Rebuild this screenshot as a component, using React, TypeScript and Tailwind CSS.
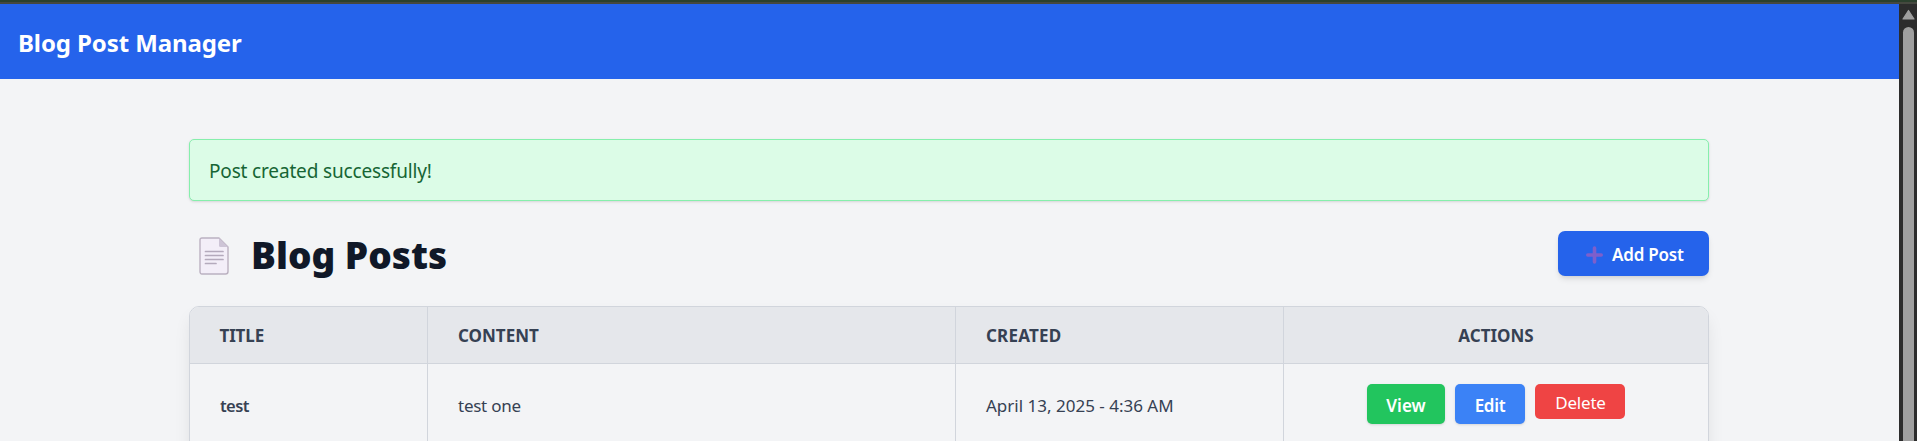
function PageIcon() {
  return (
    <svg width="30" height="38" viewBox="0 0 30 38" fill="none" aria-hidden="true">
      <path d="M3 1H20L29 10V34.500Q29 37 26.500 37H3Q1 37 1 34.500V3Q1 1 3 1Z" fill="#F3EEF8" stroke="#BBB1C1" strokeWidth="1.400" strokeLinejoin="round" />
      <path d="M20 1L29 10H21.500Q20 10 20 8.500Z" fill="#CDC4D6" />
      <path d="M6.500 14.500H24M6.500 18.500H24M6.500 22.500H24M6.500 26.500H17" stroke="#B4AABC" strokeWidth="1.700" strokeLinecap="round" />
    </svg>
  );
}

function PlusIcon() {
  return (
    <svg width="17" height="18" viewBox="0 0 17 18" fill="none" aria-hidden="true">
      <path d="M8.500 2V16M1.800 9H15.200" stroke="#7E5FCB" strokeWidth="3.600" strokeLinecap="round" />
    </svg>
  );
}

function Scrollbar() {
  return (
    <div className="flex w-[18px] shrink-0 flex-col items-center bg-[#2c2c2c] pl-px pt-[5px]">
      <svg width="13" height="11" viewBox="0 0 13 11" className="shrink-0" aria-hidden="true">
        <path d="M6.500 1.500L12 10H1Z" fill="#9F9F9F" stroke="#9F9F9F" strokeWidth="1.200" strokeLinejoin="round" />
      </svg>
      <div className="mt-[7px] w-[11px] flex-1 rounded-t-full bg-[#9f9f9f]" />
    </div>
  );
}

const columns = "grid grid-cols-[238px_528px_328px_424px]";

function PostTable() {
  return (
    <div className="mt-[30px] h-[240px] w-[1520px] overflow-hidden rounded-[10px] border border-gray-300 text-[17px] text-gray-700 shadow-[0_10px_18px_-3px_rgba(0,0,0,0.1)]">
      <div className={`${columns} h-[57px] border-b border-gray-300 bg-gray-200 text-[17px] font-bold leading-[58px]`}>
        <div className="h-14 border-r border-gray-300 pl-[29.500px] tracking-[-0.15px]">TITLE</div>
        <div className="h-14 border-r border-gray-300 pl-[30px]">CONTENT</div>
        <div className="h-14 border-r border-gray-300 pl-[30px] tracking-[0.2px]">CREATED</div>
        <div className="h-14 text-center">ACTIONS</div>
      </div>
      <div className={`${columns} h-[182px] leading-[83px]`}>
        <div className="border-r border-gray-300 pl-[30px] text-[16.500px] font-semibold tracking-[-0.6px]">test</div>
        <div className="border-r border-gray-300 pl-[30px] tracking-[-0.25px]">test one</div>
        <div className="border-r border-gray-300 pl-[30px]">April 13, 2025 - 4:36 AM</div>
        <div className="flex items-start justify-center gap-[10px] pt-5 text-white">
          <button className="h-10 w-[78px] rounded-[5px] bg-[#22c55e] pt-[2px] text-[17px] font-semibold leading-[37px] shadow-sm">View</button>
          <button className="h-10 w-[70px] rounded-[5px] bg-[#3b82f6] pt-[2px] text-[17px] font-semibold leading-[37px] tracking-[-0.3px] shadow-sm">Edit</button>
          <button className="h-[35px] w-[90px] rounded-[5px] bg-[#ef4444] pl-px pt-[2px] text-[17px] leading-[33px] tracking-[-0.2px]">Delete</button>
        </div>
      </div>
    </div>
  );
}

export default function App() {
  return (
    <div className="flex h-[441px] flex-col overflow-hidden bg-[#f3f4f6] font-['Noto_Sans','Open_Sans',sans-serif]">
      <div className="h-1 shrink-0 border-b-2 border-[#45483f] bg-[#2b402d]" />
      <div className="flex min-h-0 flex-1">
        <div className="min-w-0 flex-1 overflow-hidden">
          <nav className="flex h-[75px] items-center bg-[#2563eb] px-[18px] pt-[2px]">
            <span className="text-[24px] font-bold leading-8 tracking-[-0.1px] text-white">Blog Post Manager</span>
          </nav>
          <main className="ml-[189px] w-[1520px] pt-[60px]">
            <div className="flex h-[62px] items-center rounded-[5px] border border-[#86efac] bg-[#dcfce7] pl-[19px] pt-[3px] text-[19px] tracking-[-0.16px] text-[#166534] shadow-sm">
              Post created successfully!
            </div>
            <div className="mt-[30px] flex h-[45px] items-center justify-between">
              <h1 className="flex items-center pt-[2px] text-[37px] font-black leading-[45px] text-gray-900">
                <span className="ml-[10px] mt-[3px] mr-[22px]"><PageIcon /></span>
                Blog Posts
              </h1>
              <button className="flex h-[45px] w-[151px] items-center rounded-[7px] bg-[#2563eb] pl-[28px] text-[17px] font-semibold tracking-[-0.2px] text-white shadow-md">
                <span className="mr-[9px] mt-[3px]"><PlusIcon /></span>
                <span className="pt-[2px]">Add Post</span>
              </button>
            </div>
            <PostTable />
          </main>
        </div>
        <Scrollbar />
      </div>
    </div>
  );
}
